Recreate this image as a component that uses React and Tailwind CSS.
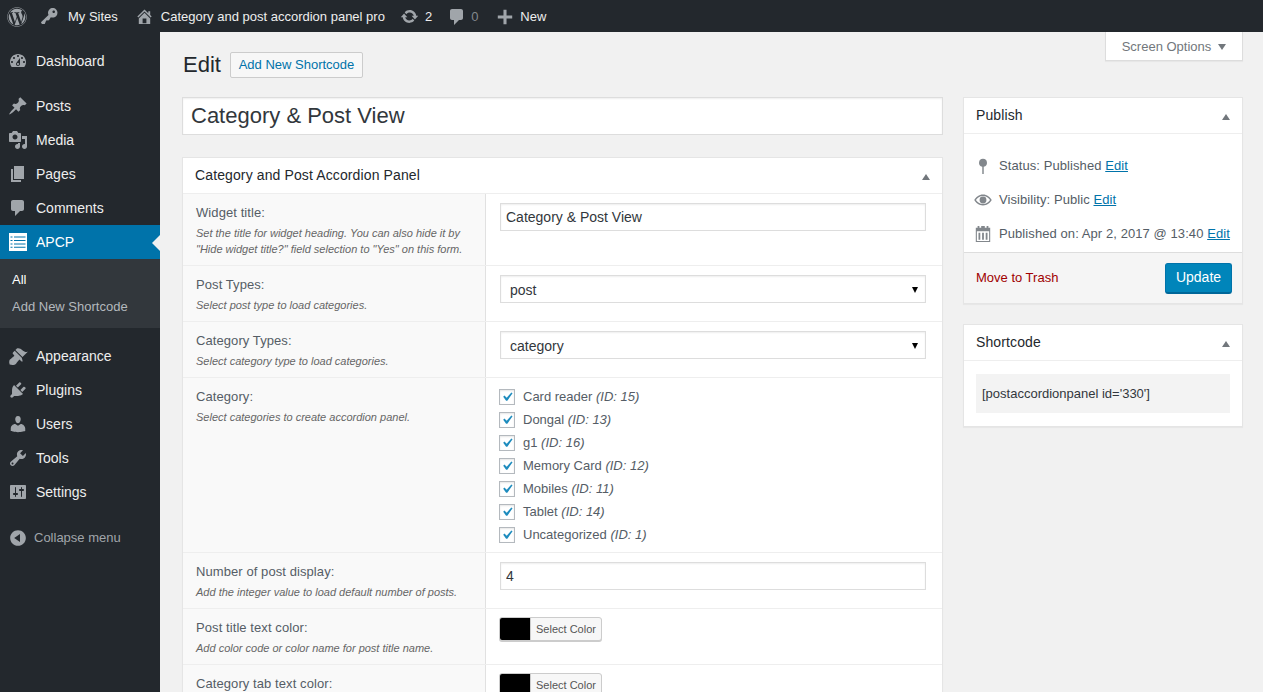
import { FaWordpress } from 'react-icons/fa';

const icons = {
  dashboard: 'M3.76 16h12.48c1.1-1.37 1.76-3.11 1.76-5 0-4.42-3.58-8-8-8s-8 3.58-8 8c0 1.89.66 3.63 1.76 5zM10 4c.55 0 1 .45 1 1s-.45 1-1 1-1-.45-1-1 .45-1 1-1zM6 6c.55 0 1 .45 1 1s-.45 1-1 1-1-.45-1-1 .45-1 1-1zm8 0c.55 0 1 .45 1 1s-.45 1-1 1-1-.45-1-1 .45-1 1-1zm-5.37 5.55L12 7v6c0 1.1-.9 2-2 2s-2-.9-2-2c0-.57.24-1.08.63-1.45zM4 10c.55 0 1 .45 1 1s-.45 1-1 1-1-.45-1-1 .45-1 1-1zm12 0c.55 0 1 .45 1 1s-.45 1-1 1-1-.45-1-1 .45-1 1-1zm-5 3c0-.55-.45-1-1-1s-1 .45-1 1 .45 1 1 1 1-.45 1-1z',
  post: 'M10.44 3.02l1.82-1.82 6.36 6.35-1.83 1.82c-1.05-.68-2.48-.57-3.41.36l-.75.75c-.92.93-1.04 2.35-.35 3.41l-1.83 1.82-2.41-2.41-2.8 2.79c-.42.42-3.38 2.71-3.8 2.29s1.86-3.39 2.28-3.81l2.79-2.79L4.1 9.36l1.83-1.82c1.05.69 2.48.57 3.4-.36l.75-.75c.93-.92 1.05-2.35.36-3.41z',
  media: 'M13 11V4c0-.55-.45-1-1-1h-1.67L9 1H5L3.67 3H2c-.55 0-1 .45-1 1v7c0 .55.45 1 1 1h10c.55 0 1-.45 1-1zM7 4.5c1.38 0 2.5 1.12 2.5 2.5S8.38 9.5 7 9.5 4.5 8.38 4.5 7 5.62 4.5 7 4.5zM14 6h5v10.5c0 1.38-1.12 2.5-2.5 2.5S14 17.88 14 16.5s1.12-2.5 2.5-2.5c.17 0 .34.02.5.05V9h-3V6zm-4 8.05V13h2v3.5c0 1.38-1.12 2.5-2.5 2.5S7 17.88 7 16.5 8.12 14 9.5 14c.17 0 .34.02.5.05z',
  page: 'M6 15V2h10v13H6zm-1 1h8v2H3V5h2v11z',
  comment: 'M5 2h9c1.1 0 2 .9 2 2v7c0 1.1-.9 2-2 2h-2l-5 5v-5H5c-1.1 0-2-.9-2-2V4c0-1.1.9-2 2-2z',
  list: 'M1 1h18v18H1V1zm1.5 3.6v1h2v-1h-2zm3.5 0v1h11.5v-1H6zM2.5 8v1h2V8h-2zM6 8v1h11.5V8H6zm-3.5 3.4v1h2v-1h-2zm3.5 0v1h11.5v-1H6zm-3.5 3.4v1h2v-1h-2zm3.5 0v1h11.5v-1H6z',
  appearance: 'M14.48 11.06L7.41 3.99l1.5-1.5c.5-.56 2.3-.47 3.51.32 1.21.8 1.43 1.28 2.91 2.1 1.18.64 2.45 1.26 4.45.85zm-.71.71L6.7 4.7 4.93 6.47c-.39.39-.39 1.02 0 1.41l1.06 1.06c.39.39.39 1.03 0 1.42-.6.6-1.43 1.11-2.21 1.69-.35.26-.7.53-1.01.84C1.43 13.23.65 15.4 1.65 18.5c3.1 1 5.27.22 6.61-1.12.31-.31.58-.66.84-1.01.58-.78 1.09-1.61 1.69-2.21.39-.39 1.03-.39 1.42 0l1.06 1.06c.39.39 1.02.39 1.41 0z',
  plugin: 'M13.11 4.36L9.87 7.6 8 5.73l3.24-3.24c.35-.34 1.05-.2 1.56.32.52.51.66 1.21.31 1.55zm-8 1.77l.91-1.12 9.01 9.01-1.19.84c-.71.71-2.63 1.16-3.82 1.16H6.14L4.9 17.26c-.59.59-1.54.59-2.12 0-.59-.58-.59-1.53 0-2.12l1.24-1.24v-3.88c0-1.13.4-3.19 1.09-3.89zm7.26 3.97l3.24-3.24c.34-.35 1.04-.21 1.55.31.52.51.66 1.21.31 1.55l-3.24 3.25z',
  users: 'M10 9.25c-2.27 0-2.73-3.44-2.73-3.44C7 4.02 7.82 2 9.97 2c2.16 0 2.98 2.02 2.71 3.81 0 0-.41 3.44-2.68 3.44zm0 2.57L12.72 10c2.39 0 4.52 2.33 4.52 4.53v2.49s-3.65 1.13-7.24 1.13c-3.65 0-7.24-1.13-7.24-1.13v-2.49c0-2.25 1.94-4.48 4.47-4.48z',
  tools: 'M16.68 9.77c-1.34 1.34-3.3 1.67-4.95.99l-5.41 6.52c-.99.99-2.59.99-3.58 0s-.99-2.59 0-3.57l6.52-5.42c-.68-1.65-.35-3.61.99-4.95 1.28-1.28 3.12-1.62 4.72-1.06l-2.89 2.89 2.82 2.82 2.86-2.87c.53 1.58.18 3.39-1.08 4.65zM3.81 16.21c.4.39 1.04.39 1.43 0 .4-.4.4-1.04 0-1.43-.39-.4-1.03-.4-1.43 0-.39.39-.39 1.03 0 1.43z',
  settings: 'M18 16V4c0-.55-.45-1-1-1H3c-.55 0-1 .45-1 1v12c0 .55.45 1 1 1h14c.55 0 1-.45 1-1zM8 11h1c.55 0 1 .45 1 1s-.45 1-1 1H8v1.5c0 .28-.22.5-.5.5s-.5-.22-.5-.5V13H6c-.55 0-1-.45-1-1s.45-1 1-1h1V5.5c0-.28.22-.5.5-.5s.5.22.5.5V11zm5-2h-1c-.55 0-1-.45-1-1s.45-1 1-1h1V5.5c0-.28.22-.5.5-.5s.5.22.5.5V7h1c.55 0 1 .45 1 1s-.45 1-1 1h-1v5.5c0 .28-.22.5-.5.5s-.5-.22-.5-.5V9z',
  collapse: 'M10 2.16c4.33 0 7.84 3.51 7.84 7.84s-3.51 7.84-7.84 7.84-7.84-3.51-7.84-7.84S5.67 2.16 10 2.16zm2 11.72V6.12L6.18 9.97z',
  network: 'M16.95 2.58c1.96 1.95 1.96 5.12 0 7.07-1.51 1.51-3.75 1.84-5.59 1.01l-1.87 3.31-2.99.31L5 18H2l-1-2 7.95-7.69c-.92-1.87-.62-4.18.93-5.73 1.95-1.96 5.12-1.96 7.07 0zm-2.51 3.79c.74 0 1.33-.6 1.33-1.34 0-.73-.59-1.33-1.33-1.33-.73 0-1.33.6-1.33 1.33 0 .74.6 1.34 1.33 1.34z',
  home: 'M16 8.5l1.53 1.53-1.06 1.06L10 4.62l-6.47 6.47-1.06-1.06L10 2.5l4 4v-2h2v4zm-6-2.46l6 5.99V18H4v-5.97zM12 17v-5H8v5h4z',
  update: 'M10.2 3.28c3.53 0 6.43 2.61 6.92 6h2.08l-3.5 4-3.5-4h2.32c-.45-1.97-2.21-3.45-4.32-3.45-1.45 0-2.73.71-3.54 1.78L4.95 5.66C6.23 4.2 8.11 3.28 10.2 3.28zm-.4 13.44c-3.52 0-6.43-2.61-6.92-6H.8l3.5-4c1.17 1.33 2.33 2.67 3.5 4H5.48c.45 1.97 2.21 3.45 4.32 3.45 1.45 0 2.73-.71 3.54-1.78l1.71 1.95c-1.28 1.46-3.15 2.38-5.25 2.38z',
  plus: 'M18 8.3v3.4h-6.3V18H8.3v-6.3H2V8.3h6.3V2h3.4v6.3H18z',
  status: 'M10 2a4.4 4.4 0 0 1 .8 8.73V19H9.2v-8.27A4.4 4.4 0 0 1 10 2z',
  eye: 'M10 4C5.5 4 2 7 .3 10 2 13 5.5 16 10 16s8-3 9.7-6C18 7 14.5 4 10 4zm0 1.5c3.6 0 6.3 2.2 7.8 4.5-1.5 2.3-4.2 4.5-7.8 4.5S3.7 12.3 2.2 10C3.7 7.7 6.4 5.5 10 5.5zm0 .7a3.8 3.8 0 1 0 0 7.6 3.8 3.8 0 0 0 0-7.6z',
  calendar: 'M4 1h2v2h2V1h4v2h2V1h2v2h2v16H2V3h2V1zM3.2 7v10.8h13.6V7H3.2zM5 8.5h2v8H5v-8zm4 0h2v8H9v-8zm4 0h2v8h-2v-8z',
};

function Icon({ name, className }) {
  return (
    <svg viewBox="0 0 20 20" fill="currentColor" className={className}>
      <path d={icons[name]} fillRule="evenodd" />
    </svg>
  );
}

function MenuItem({ icon, label, active }) {
  return (
    <a className={`relative flex h-[34px] items-center text-[14px] ${active ? 'bg-[#0073aa] text-white' : 'text-[#eeeeee]'}`}>
      <span className="flex w-[36px] justify-center">
        <Icon name={icon} className={`h-5 w-5 ${active ? 'text-white' : 'text-[#a0a5aa]'}`} />
      </span>
      {label}
      {active && (
        <span className="absolute top-[10px] right-0 h-0 w-0 border-y-[8px] border-r-[8px] border-y-transparent border-r-[#f1f1f1]" />
      )}
    </a>
  );
}

function Sidebar() {
  return (
    <aside className="w-[160px] shrink-0 bg-[#23282d] pt-[12px]">
      <MenuItem icon="dashboard" label="Dashboard" />
      <div className="h-[11px]" />
      <MenuItem icon="post" label="Posts" />
      <MenuItem icon="media" label="Media" />
      <MenuItem icon="page" label="Pages" />
      <MenuItem icon="comment" label="Comments" />
      <MenuItem icon="list" label="APCP" active />
      <div className="h-[69px] bg-[#32373c] pt-[8px] pl-[12px] text-[13px]">
        <div className="h-[26px] leading-[26px] text-white">All</div>
        <div className="mt-px h-[26px] leading-[26px] text-[#b4b9be]">Add New Shortcode</div>
      </div>
      <div className="h-[11px]" />
      <MenuItem icon="appearance" label="Appearance" />
      <MenuItem icon="plugin" label="Plugins" />
      <MenuItem icon="users" label="Users" />
      <MenuItem icon="tools" label="Tools" />
      <MenuItem icon="settings" label="Settings" />
      <div className="mt-[18px] flex h-[22px] items-center text-[13px] text-[#a0a5aa]">
        <span className="flex w-[36px] justify-center">
          <Icon name="collapse" className="h-5 w-5 text-[#a0a5aa]" />
        </span>
        <span className="-ml-[2px]">Collapse menu</span>
      </div>
    </aside>
  );
}

function AdminBar() {
  return (
    <header className="flex h-[32px] shrink-0 items-center bg-[#23282d] pt-px text-[13px] text-[#eeeeee]">
      <FaWordpress className="ml-[7px] h-[20px] w-[20px] text-[#a0a5aa]" />
      <Icon name="network" className="ml-[13px] h-[19px] w-[19px] text-[#a0a5aa]" />
      <span className="ml-[9px]">My Sites</span>
      <Icon name="home" className="ml-[17px] h-[19px] w-[19px] text-[#a0a5aa]" />
      <span className="ml-[7px]">Category and post accordion panel pro</span>
      <Icon name="update" className="ml-[15px] h-[19px] w-[19px] text-[#a0a5aa]" />
      <span className="ml-[6px]">2</span>
      <Icon name="comment" className="ml-[15px] h-[20px] w-[20px] text-[#a0a5aa]" />
      <span className="ml-[4px] text-[#82878c]">0</span>
      <Icon name="plus" className="ml-[18px] h-[18px] w-[18px] text-[#a0a5aa]" />
      <span className="ml-[6px]">New</span>
    </header>
  );
}

function Row({ label, desc, className, children }) {
  return (
    <div className={`flex border-b border-[#eeeeee] ${className}`}>
      <div className="w-[303px] shrink-0 border-r border-[#e1e1e1] bg-[#f9f9f9] pt-[10px] pl-[13px]">
        <div className="text-[13px] leading-[17px] tracking-[0.08px] text-[#555d66]">{label}</div>
        {desc && <div className="mt-[4px] text-[11px] leading-[16px] text-[#666666] italic">{desc}</div>}
      </div>
      <div className="flex-1 pt-[9px] pl-[14px]">{children}</div>
    </div>
  );
}

function TextField({ value }) {
  return (
    <input
      readOnly
      defaultValue={value}
      className="block h-[28px] w-[426px] border border-[#dddddd] bg-white px-[5px] text-[14px] text-[#32373c] shadow-[inset_0_1px_2px_rgba(0,0,0,0.07)] outline-none"
    />
  );
}

function SelectField({ value }) {
  return (
    <div className="relative h-[28px] w-[426px] border border-[#dddddd] bg-white pl-[9px] text-[14px] leading-[28px] text-[#32373c] shadow-[inset_0_1px_2px_rgba(0,0,0,0.07)]">
      {value}
      <span className="absolute top-[11px] right-[7px] h-0 w-0 border-x-[3.5px] border-t-[6px] border-x-transparent border-t-black" />
    </div>
  );
}

function CheckItem({ name, id }) {
  return (
    <label className="-ml-px flex h-[23px] items-center text-[13px] text-[#555d66]">
      <span className="flex h-4 w-4 items-center justify-center border border-[#b4b9be] bg-white shadow-[inset_0_1px_2px_rgba(0,0,0,0.1)]">
        <svg viewBox="0 0 20 20" className="h-[18px] w-[18px] shrink-0 text-[#1e8cbe]" fill="currentColor">
          <path d="M14.83 4.89l1.34.94-5.81 8.38H9.02L5.78 9.67l1.34-1.25 2.57 2.4z" />
        </svg>
      </span>
      <span className="ml-[8px]">
        {name} <em className="italic">(ID: {id})</em>
      </span>
    </label>
  );
}

function ColorButton() {
  return (
    <div className="-mt-px -ml-px flex h-[24px] w-[103px] overflow-hidden rounded-[3px] border border-[#cccccc] bg-[#f7f7f7] shadow-[0_1px_0_#cccccc]">
      <span className="w-[30px] bg-black" />
      <span className="flex-1 border-l border-[#cccccc] text-center text-[11px] leading-[22px] text-[#555555]">Select Color</span>
    </div>
  );
}

function Collapse() {
  return <span className="mt-[3px] h-0 w-0 border-x-[4.5px] border-b-[6px] border-x-transparent border-b-[#72777c]" />;
}

function BoxHeader({ title, className }) {
  return (
    <div className={`flex h-[36px] items-center justify-between border-b border-[#eeeeee] text-[14px] tracking-[0.12px] text-[#23282d] ${className}`}>
      {title}
      <Collapse />
    </div>
  );
}

function MetaRow({ icon, children }) {
  return (
    <div className="flex h-[34px] items-center text-[13px] tracking-[0.08px] whitespace-nowrap text-[#555d66]">
      <span className="flex w-[25px] justify-start">
        <Icon name={icon} className="h-[18px] w-[18px] text-[#82878c]" />
      </span>
      <span>{children}</span>
    </div>
  );
}

function EditLink() {
  return <a className="text-[#0073aa] underline">Edit</a>;
}

const categories = [
  ['Card reader', 15],
  ['Dongal', 13],
  ['g1', 16],
  ['Memory Card', 12],
  ['Mobiles', 11],
  ['Tablet', 14],
  ['Uncategorized', 1],
];

export default function App() {
  return (
    <div className="flex h-[692px] flex-col overflow-hidden bg-[#f1f1f1] font-['Liberation_Sans',Arial,sans-serif]">
      <AdminBar />
      <div className="flex min-h-0 flex-1">
        <Sidebar />
        <main className="relative min-w-0 flex-1 pr-[20px] pl-[22px]">
          {/* Screen options tab */}
          <div className="absolute top-0 right-[20px] flex h-[29px] w-[138px] items-center justify-center gap-[7px] border border-t-0 border-[#dddddd] bg-white pt-px text-[13px] text-[#72777c] shadow-[0_1px_1px_rgba(0,0,0,0.04)]">
            Screen Options
            <span className="h-0 w-0 border-x-[4.5px] border-t-[6px] border-x-transparent border-t-[#72777c]" />
          </div>

          <div className="flex h-[65px] items-start pt-[20px]">
            <h1 className="w-[48px] pl-px text-[22px] leading-[26px] text-[#23282d]">Edit</h1>
            <a className="flex h-[26px] w-[133px] items-center justify-center rounded-[2px] border border-[#cccccc] bg-[#f7f7f7] text-[13px] text-[#0073aa]">
              Add New Shortcode
            </a>
          </div>

          <div className="flex gap-[20px]">
            <div className="w-[761px] shrink-0">
              <input
                readOnly
                defaultValue="Category & Post View"
                className="block h-[38px] w-full border border-[#dddddd] bg-white px-[8px] text-[22px] text-[#32373c] shadow-[inset_0_1px_2px_rgba(0,0,0,0.07)] outline-none"
              />

              <section className="mt-[22px] border border-[#e5e5e5] bg-white shadow-[0_1px_1px_rgba(0,0,0,0.04)]">
                <BoxHeader title="Category and Post Accordion Panel" className="pr-[12px] pl-[12px]" />
                <Row
                  className="h-[72px]"
                  label="Widget title:"
                  desc={
                    <>
                      Set the title for widget heading. You can also hide it by
                      <br />
                      "Hide widget title?" field selection to "Yes" on this form.
                    </>
                  }
                >
                  <TextField value="Category & Post View" />
                </Row>
                <Row className="h-[56px]" label="Post Types:" desc="Select post type to load categories.">
                  <SelectField value="post" />
                </Row>
                <Row className="h-[56px]" label="Category Types:" desc="Select category type to load categories.">
                  <SelectField value="category" />
                </Row>
                <Row className="h-[175px]" label="Category:" desc="Select categories to create accordion panel.">
                  <div className="-mt-[2px]">
                    {categories.map(([name, id]) => (
                      <CheckItem key={id} name={name} id={id} />
                    ))}
                  </div>
                </Row>
                <Row className="h-[56px]" label="Number of post display:" desc="Add the integer value to load default number of posts.">
                  <TextField value="4" />
                </Row>
                <Row className="h-[56px]" label="Post title text color:" desc="Add color code or color name for post title name.">
                  <ColorButton />
                </Row>
                <Row className="h-[56px]" label="Category tab text color:">
                  <ColorButton />
                </Row>
              </section>
            </div>

            <div className="w-[280px] shrink-0">
              <section className="border border-[#e5e5e5] bg-white shadow-[0_1px_1px_rgba(0,0,0,0.04)]">
                <BoxHeader title="Publish" className="pr-[12px] pl-[12px]" />
                <div className="pt-[15px] pb-[1px] pl-[10px]">
                  <MetaRow icon="status">
                    Status: Published <EditLink />
                  </MetaRow>
                  <MetaRow icon="eye">
                    Visibility: Public <EditLink />
                  </MetaRow>
                  <MetaRow icon="calendar">
                    Published on: Apr 2, 2017 @ 13:40 <EditLink />
                  </MetaRow>
                </div>
                <div className="flex h-[51px] items-center justify-between border-t border-[#dddddd] bg-[#f5f5f5] pr-[10px] pl-[12px]">
                  <a className="text-[13px] text-[#a00000]">Move to Trash</a>
                  <button className="h-[31px] w-[67px] rounded-[3px] border border-[#0073aa] border-b-[2px] border-b-[#006799] bg-[#0085ba] text-[14px] text-white">
                    Update
                  </button>
                </div>
              </section>

              <section className="mt-[20px] border border-[#e5e5e5] bg-white pb-[13px] shadow-[0_1px_1px_rgba(0,0,0,0.04)]">
                <BoxHeader title="Shortcode" className="pr-[12px] pl-[12px]" />
                <div className="mx-[12px] mt-[13px] h-[39px] bg-[#f3f3f3] pl-[6px] text-[13px] leading-[39px] text-[#32373c]">
                  [postaccordionpanel id='330']
                </div>
              </section>
            </div>
          </div>
        </main>
      </div>
    </div>
  );
}
